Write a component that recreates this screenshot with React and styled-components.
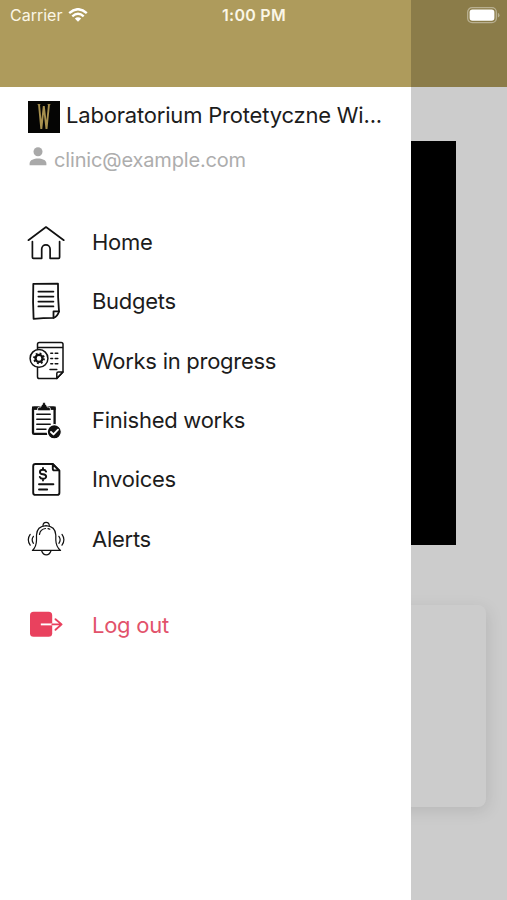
import React from "react";
import styled, { createGlobalStyle } from "styled-components";

const GOLD = "#ae9b5c";

function HomeIcon(){
	return (
		<Icon viewBox="0 0 40 40" $stroke={1.7}>
			<path d="M2.4 17.2 20 4 37.8 17.2" />
			<path d="M6.4 18.5V34.3q0 1 1 1H15.7V26a4.2 4.2 0 0 1 8.4 0V35.3H32.6q1 0 1-1V18.5" />
		</Icon>
	);
}

function BudgetsIcon(){
	return (
		<Icon viewBox="0 0 40 40" $stroke={1.8}>
			<path d="M7.3 1.9 32 1.7Q31.7 15 33 29.4 31.5 34.5 27.5 35.9 17 36 7.6 36.9 6.7 20 7.3 1.9Z" />
			<path d="M27.5 35.8V29.4H33" />
			<path d="M12.4 9.6H27.4M12.4 14.6H27.4M12.4 19.6H27.4M12.4 24.4H27.4" />
		</Icon>
	);
}

function ProgressIcon(){
	return (
		<Icon viewBox="0 0 40 40" $stroke={1.5}>
			<path d="M11.5 8V3.2q0-1.8 1.8-1.8H35.2q1.8 0 1.8 1.8V31L30.8 37.6H13.3q-1.8 0-1.8-1.8V26.5M11.5 6.6H37" />
			<path d="M30.8 37.4V32.6q0-1.6 1.6-1.6H37Z" />
			<circle cx="13" cy="17.4" r="8.9" />
			<circle cx="13" cy="17.4" r="3.5" strokeWidth="2.4" />
			<circle cx="13" cy="17.4" r="5" strokeWidth="1.8" strokeDasharray="1.8 2.13" strokeLinecap="butt" />
			<path d="M24.8 12.2H26.6M29.2 12.2H31.8M24.8 17.4H26.6M29.2 17.4H31.8M24.8 22.7H26.6M29.2 22.7H31.8M24 28.4H30.8" />
		</Icon>
	);
}

function FinishedIcon(){
	return (
		<Icon viewBox="0 0 40 40" $stroke={1.5}>
			<rect x="7" y="6.6" width="21.6" height="26.3" rx="1.2" strokeWidth="2.3" />
			<path d="M6 5.5H29.7V8.9H6Z" fill="#111" stroke="none" />
			<path d="M11.6 9.6V8q0-1.9 1.9-1.9H14.7Q15.1 4.1 16.2 3.8 16.7 1 18 1t1.8 2.8Q20.9 4.1 21.3 6.1H22.5q1.9 0 1.9 1.9V9.6Z" fill="#111" stroke="#fff" strokeWidth=".8" />
			<path d="M10.8 13.3H24.2M10.8 18.3H24.2M10.8 23.3H24.2M10.8 28.3H20" />
			<circle cx="28.3" cy="30.8" r="7.1" fill="#111" stroke="#fff" strokeWidth="1.2" />
			<path d="M25 31 27.5 33.4 32 28.7" stroke="#fff" strokeWidth="1.9" />
		</Icon>
	);
}

function InvoicesIcon(){
	return (
		<Icon viewBox="0 0 40 40" $stroke={1.9}>
			<path d="M9.4 4H26.8L33.4 10.6V32.7q0 2.2-2.2 2.2H9.4q-2.2 0-2.2-2.2V6.2Q7.2 4 9.4 4Z" />
			<path d="M26.8 4.2V8.8q0 1.6 1.6 1.6H33Z" />
			<path d="M20.1 11.6Q19.4 9.8 17 9.8c-4.1 0-4.1 4.3 0 4.5s4.3 4.5 0 4.5q-2.5 0-3.2-1.9M17 8V9.8M17 18.8V20.6" />
			<path d="M13 24.3H27.4M13 29.5H21.2" />
		</Icon>
	);
}

function AlertsIcon(){
	return (
		<Icon viewBox="0 0 40 40" $stroke={1.2}>
			<path d="M6.4 31.4Q10.4 28 10.5 21V16Q10.8 7.3 20 6.6 29.4 7.3 29.8 16V21Q30 28 34.6 31.4Z" />
			<path d="M17 6.8Q17 3.4 20.1 3.4T23.3 6.8M15.6 31.8Q17 35.9 20.3 35.9T25 31.8" />
			<path d="M13.5 15.3Q14.2 10.3 19.5 9.5M22 9.6Q23 9.8 23.8 10.2" />
			<path d="M7.4 17.3Q4.9 20.7 7.4 24.3M4.2 15.4Q.4 20.7 4.2 26.2M32.9 17.3Q35.4 20.7 32.9 24.3M36 15.4Q39.8 20.7 36 26.2" />
		</Icon>
	);
}

function LogoutIcon(){
	return (
		<Icon viewBox="0 0 40 40" $stroke={1.9} $color="#e9415e">
			<rect x="4" y="6.8" width="22.2" height="25" rx="3.6" fill="#e9415e" stroke="none" />
			<path d="M14.8 19.4H26.2" stroke="#fff" strokeLinecap="butt" />
			<path d="M26.4 19.4H35.3M29.5 14.2 35.6 19.4 29.5 24.8" />
		</Icon>
	);
}

const menu = [
	{ name: "Home", icon: <HomeIcon /> },
	{ name: "Budgets", icon: <BudgetsIcon /> },
	{ name: "Works in progress", icon: <ProgressIcon /> },
	{ name: "Finished works", icon: <FinishedIcon /> },
	{ name: "Invoices", icon: <InvoicesIcon /> },
	{ name: "Alerts", icon: <AlertsIcon /> }
];

export default function App(){
	return (
		<Screen>
			<GlobalStyle />
			<Header />
			<Banner />
			<Card />
			<Backdrop />
			<Drawer>
				<Header />
				<Account>
					<Clinic>
						<Logo viewBox="0 0 32 32">
							<path d="M11 3.5 13.3 28 15.8 5 18.5 28 21 3.5" />
							<path d="M9.6 3.6H12.4M19.6 3.6H22.4" strokeWidth=".9" />
						</Logo>
						<ClinicName>Laboratorium Protetyczne Wi...</ClinicName>
					</Clinic>
					<User>
						<UserIcon viewBox="0 0 18 19">
							<circle cx="9" cy="4.7" r="4.5" />
							<path d="M.6 18.2V16.4C.6 13 5 11.5 9 11.5s8.4 1.5 8.4 4.9v1.8Z" />
						</UserIcon>
						<Email>clinic@example.com</Email>
					</User>
				</Account>
				<Menu>
					{menu.map(item => (
						<Item key={item.name}>
							{item.icon}
							<Label>{item.name}</Label>
						</Item>
					))}
				</Menu>
				<Item $danger>
					<LogoutIcon />
					<Label>Log out</Label>
				</Item>
			</Drawer>
			<StatusBar>
				<Carrier>
					Carrier
					<Wifi viewBox="0 0 20 14">
						<path d="M1.2 5.1Q10-2.7 18.8 5.1M4.3 8.3Q10 3.3 15.7 8.3" />
						<path d="M6.8 10.6Q10 7.8 13.2 10.6L10 13.8Z" fill="#fff" stroke="none" />
					</Wifi>
				</Carrier>
				<Clock>1:00 PM</Clock>
				<Battery viewBox="0 0 33 17">
					<rect x=".7" y=".7" width="28.6" height="15" rx="4.4" fill="none" stroke="#fff" strokeOpacity=".4" strokeWidth="1.3" />
					<rect x="2.6" y="2.6" width="24.8" height="11.2" rx="2.8" fill="#fff" />
					<path d="M30.9 5.8Q32.5 6.4 32.5 8.2T30.9 10.6Z" fill="#fff" fillOpacity=".4" />
				</Battery>
			</StatusBar>
		</Screen>
	);
}

const GlobalStyle = createGlobalStyle`
	* {
		box-sizing: border-box;
	}
	body {
		margin: 0;
		font-family: Inter, "Liberation Sans", sans-serif;
		color: #1c1c1c;
	}
`;

const Screen = styled.div`
	position: relative;
	width: 507px;
	height: 900px;
	overflow: hidden;
	background: #fff;
`;

const Header = styled.header`
	height: 87px;
	background: ${GOLD};
`;

const Banner = styled.div`
	width: 405px;
	height: 404px;
	margin: 54px auto 0;
	background: #000;
`;

const Card = styled.div`
	height: 202px;
	margin: 60px 21px 0;
	border-radius: 8px;
	background: #fff;
	box-shadow: 2px 4px 16px rgba(0, 0, 0, 0.1);
`;

const Backdrop = styled.div`
	position: absolute;
	inset: 0;
	background: rgba(0, 0, 0, 0.2);
`;

const Drawer = styled.aside`
	position: absolute;
	top: 0;
	left: 0;
	width: 411px;
	height: 100%;
	background: #fff;
`;

const Account = styled.div`
	height: 126px;
	padding: 13px 0 0 28px;
`;

const Clinic = styled.div`
	display: flex;
	align-items: center;
	height: 33px;
`;

const Logo = styled.svg`
	width: 32px;
	height: 32px;
	margin-right: 6px;
	background: #050504;
	fill: none;
	stroke: #a8914f;
	stroke-width: 1.9;
`;

const ClinicName = styled.div`
	padding-bottom: 3px;
	font-size: 22px;
	letter-spacing: -0.19px;
	line-height: 30px;
	white-space: nowrap;
`;

const User = styled.div`
	display: flex;
	align-items: center;
	height: 28px;
	margin-top: 12px;
`;

const UserIcon = styled.svg`
	width: 18px;
	height: 19px;
	margin: 0 7px 5px 1px;
	fill: #a9a9a9;
`;

const Email = styled.div`
	padding-top: 2px;
	font-size: 20px;
	letter-spacing: -0.16px;
	color: #adadad;
`;

const Menu = styled.nav`
	margin-bottom: 27px;
`;

const Item = styled.div`
	display: flex;
	align-items: center;
	height: 59.3px;
	padding-left: 26px;
	color: ${props => props.$danger ? "#e2526b" : "#1c1c1c"};
`;

const Icon = styled.svg`
	flex: none;
	width: 40px;
	height: 40px;
	margin-right: 26px;
	fill: none;
	stroke: ${props => props.$color || "#111"};
	stroke-width: ${props => props.$stroke};
	stroke-linecap: round;
	stroke-linejoin: round;
`;

const Label = styled.span`
	padding-bottom: 1px;
	font-size: 22px;
	letter-spacing: -0.27px;
	white-space: nowrap;
`;

const StatusBar = styled.div`
	position: absolute;
	top: 0;
	left: 0;
	display: grid;
	grid-template-columns: 1fr auto 1fr;
	align-items: center;
	width: 100%;
	height: 30px;
	padding: 0 8px 0 10px;
	color: #fbf6e6;
`;

const Carrier = styled.div`
	display: flex;
	align-items: center;
	font-size: 16px;
`;

const Wifi = styled.svg`
	width: 20px;
	height: 14px;
	margin-left: 6px;
	fill: none;
	stroke: #fff;
	stroke-width: 2.4;
`;

const Clock = styled.div`
	margin-right: 1px;
	font-size: 16px;
	font-weight: 600;
	letter-spacing: 0.25px;
`;

const Battery = styled.svg`
	justify-self: end;
	width: 33px;
	height: 17px;
	margin-right: -1px;
`;
